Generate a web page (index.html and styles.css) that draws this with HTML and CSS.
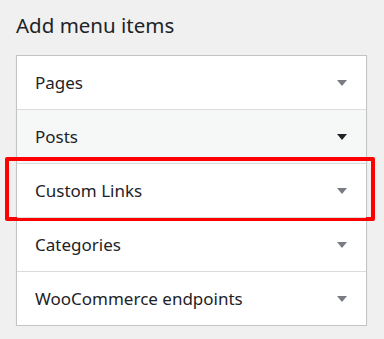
FILE: index.html
```html
<!DOCTYPE html>
<html>
    <head>
        <link rel="stylesheet" href="styles.css">
    </head>
    <body>
        <div id="menu-settings">
            <h2>Add menu items</h2>
            <ul class="accordion">
                <li class="section"><h3>Pages</h3></li>
                <li class="section hover"><h3>Posts</h3></li>
                <li class="section marked"><h3>Custom Links</h3></li>
                <li class="section"><h3>Categories</h3></li>
                <li class="section"><h3>WooCommerce endpoints</h3></li>
            </ul>
        </div>
    </body>
</html>
```
FILE: styles.css
```css
body {
    font-family: "Noto Sans", "Open Sans", sans-serif;
    background-color: #f0f0f1;
    color: #1d2327;
    margin: 0;
}

#menu-settings {
    padding: 0 17px 0 16px;
}

h2 {
    font-size: 20.5px;
    font-weight: 400;
    margin: 0;
    padding-top: 10px;
    height: 45px;
    line-height: 30px;
}

.accordion {
    list-style: none;
    margin: 0;
    padding: 0;
    border: 1px solid #c3c4c7;
    background-color: #fff;
    box-shadow: 0 1px 1px rgba(0, 0, 0, 0.08);
}

.section {
    position: relative;
    border-top: 1px solid #dcdcde;
}
.section:first-child {
    border-top: none;
}

.section h3 {
    margin: 0;
    font-size: 17px;
    font-weight: 400;
    height: 53px;
    line-height: 53px;
    padding: 0 18px;
    display: flex;
    justify-content: space-between;
    align-items: center;
}
.section h3::after {
    content: "";
    border-left: 5px solid transparent;
    border-right: 5px solid transparent;
    border-top: 6px solid #787c82;
    margin-right: 1px;
}

.hover h3 {
    background-color: #f6f7f7;
}
.hover h3::after {
    border-top-color: #1d2327;
}

.marked::before {
    content: "";
    position: absolute;
    top: -7px;
    left: -12px;
    right: -9px;
    bottom: -4px;
    border: 4px solid #ff0000;
    border-radius: 2px;
    pointer-events: none;
}
```
